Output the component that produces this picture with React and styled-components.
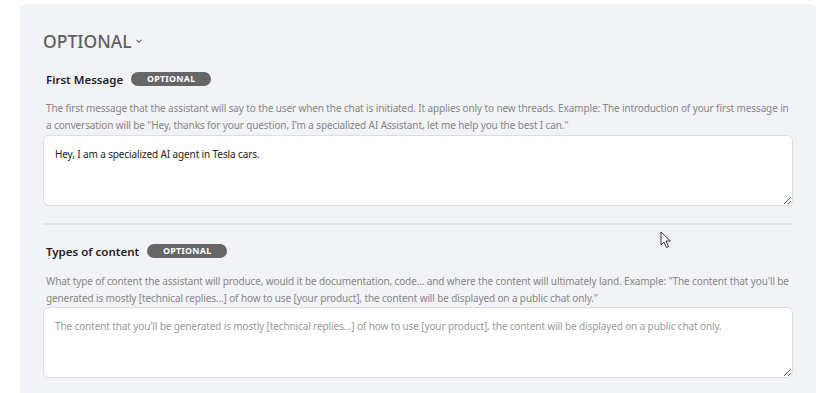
import React from 'react';
import styled, { createGlobalStyle } from "styled-components";

const GlobalStyle = createGlobalStyle`
    body {
        margin: 0;
        background: #fff;
        font-family: "Noto Sans", "Open Sans", sans-serif;
    }
`;

const Card = styled.div`
    position: relative;
    margin: 4px 18px 0 20px;
    padding: 25px 23px 40px;
    background-color: #f2f3f7;
    border-radius: 6px;
`;

const Title = styled.h2`
    display: flex;
    align-items: center;
    gap: 3px;
    margin: 0;
    font-size: 17.5px;
    line-height: 24px;
    font-weight: 500;
    color: #5f5f5f;
`;

const Section = styled.div`
    padding-left: 0;
`;

const LabelRow = styled.div`
    display: flex;
    align-items: center;
    gap: 8px;
    height: 20px;
    margin: ${p => p.$top}px 0 0 3px;
`;

const Label = styled.span`
    font-size: 11.5px;
    font-weight: 600;
    color: #222;
`;

const Badge = styled.span`
    display: inline-flex;
    align-items: center;
    justify-content: center;
    width: 80px;
    height: 14px;
    border-radius: 7px;
    background-color: #666;
    color: #fff;
    font-size: 8.8px;
    font-weight: 700;
    letter-spacing: 0.3px;
`;

const Description = styled.p`
    margin: ${p => p.$top}px 0 0 3px;
    font-size: 10px;
    line-height: ${p => p.$lh}px;
    color: #868686;
    letter-spacing: -0.12px;
`;

const TextArea = styled.textarea`
    display: block;
    box-sizing: border-box;
    width: 750px;
    height: 71px;
    margin-top: ${p => p.$top}px;
    padding: 10px 11px;
    border: 1px solid #dcdde2;
    border-radius: 6px;
    background: #fff;
    font-family: "Noto Sans", "Open Sans", sans-serif;
    font-size: 10px;
    letter-spacing: -0.12px;
    line-height: 16px;
    color: #222;
    outline: none;

    &::placeholder {
        color: #9a9a9a;
    }
`;

const Divider = styled.hr`
    width: 750px;
    margin: 17px 0 0;
    border: none;
    height: 2px;
    background-color: #e1e3e8;
`;

const Cursor = styled.svg`
    position: absolute;
    left: 640px;
    top: 227px;
`;

function Chevron() {
    return (
        <svg width="8" height="6" viewBox="0 0 8 6">
            <path d="M1.5 1.8 L4 4.2 L6.5 1.8" fill="none" stroke="#666" strokeWidth="1.1" />
        </svg>
    );
}

function App() {
    return (
        <>
            <GlobalStyle />
            <Card>
                <Title>OPTIONAL<Chevron /></Title>
                <Section>
                    <LabelRow $top={16}>
                        <Label>First Message</Label>
                        <Badge>OPTIONAL</Badge>
                    </LabelRow>
                    <Description $top={11} $lh={17}>
                        The first message that the assistant will say to the user when the chat is initiated. It applies only to new threads. Example: The introduction of your first message in a conversation will be "Hey, thanks for your question, I'm a specialized AI Assistant, let me help you the best I can."
                    </Description>
                    <TextArea $top={1} defaultValue="Hey, I am a specialized AI agent in Tesla cars." />
                </Section>
                <Divider />
                <Section>
                    <LabelRow $top={16}>
                        <Label>Types of content</Label>
                        <Badge>OPTIONAL</Badge>
                    </LabelRow>
                    <Description $top={12} $lh={16.5}>
                        What type of content the assistant will produce, would it be documentation, code... and where the content will ultimately land. Example: "The content that you'll be generated is mostly [technical replies...] of how to use [your product], the content will be displayed on a public chat only."
                    </Description>
                    <TextArea $top={1} placeholder="The content that you'll be generated is mostly [technical replies...] of how to use [your product], the content will be displayed on a public chat only." />
                </Section>
                <Cursor width="12" height="18" viewBox="0 0 12 18">
                    <path d="M1 1 L1 14 L4 11 L6.5 16.5 L8.5 15.5 L6 10 L10.5 10 Z" fill="#fff" stroke="#333" strokeWidth="1" strokeLinejoin="round" />
                </Cursor>
            </Card>
        </>
    );
}

export default App;
